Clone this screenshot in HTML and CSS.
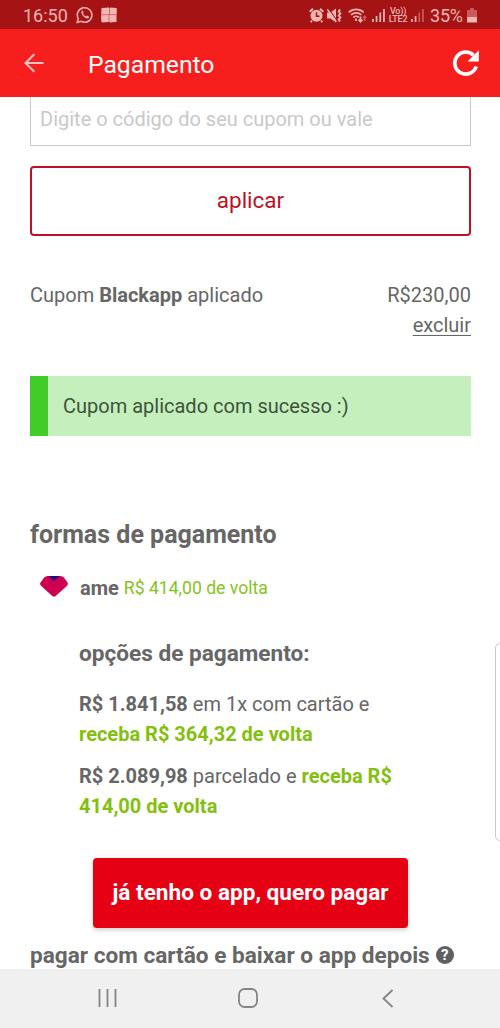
FILE: index.html
```html
<!DOCTYPE html>
<html lang="pt-BR">
<head>
<meta charset="utf-8">
<title>Pagamento</title>
<link rel="stylesheet" href="styles.css">
</head>
<body>
<div class="screen">
  <div class="status">
    <span class="time">16:50</span>
    <svg class="whats" width="18" height="18" viewBox="0 0 18 18" fill="none" stroke="currentColor"><path d="M1.2 16.5 2.3 12.6A7.3 7.3 0 1 1 5.2 15.4Z" stroke-width="1.5"/><path d="M5.5 5.2c.6-1 1.4-.7 1.7.2l.4 1.1-.7 1c.7 1.5 1.7 2.4 3.2 3l1-.9 1.7.8c.5.3.2 1.5-.8 1.9-2.700.7-7.300-3.500-6.500-7.100Z" fill="currentColor" stroke="none"/></svg>
    <svg class="tiles" width="16" height="16" viewBox="0 0 16 16" fill="currentColor"><path d="M1 1 8 .5V7L.5 7.500ZM9 .5 15.500 1V7L9 7.300ZM0 8.500 7.500 8v7L1 15.500ZM8.500 8.300 15 8v7l-6.500.5Z"/><path opacity=".55" d="M0 1h16v14H0z"/></svg>
    <span class="grow"></span>
    <svg class="alarm" width="15" height="15" viewBox="0 0 15 15"><path d="M.6 3.800 4 .8M11 .8l3.400 3M3 12.500 1.700 14.300M12 12.500l1.300 1.800" stroke="currentColor" stroke-width="1.900"/><circle cx="7.500" cy="7.800" r="6" fill="currentColor"/><path d="M7.500 4.200v4h3" fill="none" stroke="#a61314" stroke-width="1.500"/></svg>
    <svg class="mute" width="15" height="15" viewBox="0 0 15 15" fill="currentColor"><path d="M0 4.500h3.500L9 .5v14L3.500 10.500H0Z"/><path d="m1.500 .5 9 13" stroke="#a61314" stroke-width="1.200"/><path d="m.3 1.200 9 12.600" stroke="currentColor" stroke-width="1.500"/><path d="m13 1.500-1.200 2 1.500 2-1.500 2 1.500 2-1.500 2 1.200 2" fill="none" stroke="currentColor" stroke-width="2"/></svg>
    <svg class="wifi" width="19" height="15" viewBox="0 0 19 15" fill="none" stroke="currentColor" stroke-width="1.700"><path d="M.7 4.300a11 11 0 0 1 15 0M3 6.900a7.500 7.500 0 0 1 10.400 0M5.300 9.500a4 4 0 0 1 5.600 0"/><circle cx="8" cy="11.700" r="1.200" fill="currentColor" stroke="none"/><path d="M12.500 8.500v5m-1.900-1.800 1.900 2 1.900-2"/><path opacity=".45" d="M16.700 13V8.500m-1.500 1.500 1.500-1.800 1.500 1.800"/></svg>
    <svg class="bars" width="13" height="13" viewBox="0 0 13 13" fill="currentColor"><path d="M0 10h1.700v3H0zM3.700 7h1.700v6H3.700zM7.400 3.500h1.700V13H7.400zM11.100 0h1.700v13h-1.700z"/></svg>
    <span class="lte"><span>Vo))</span><span>LTE2</span></span>
    <svg class="bars2" width="13" height="13" viewBox="0 0 13 13" fill="currentColor"><path d="M0 10h1.700v3H0zM3.700 7h1.700v6H3.700z"/><path opacity=".45" d="M7.400 3.500h1.700V13H7.400zM11.100 0h1.700v13h-1.700z"/></svg>
    <span class="pct">35%</span>
    <svg class="batt" width="10" height="15" viewBox="0 0 10 15" fill="currentColor"><path opacity=".45" d="M3 0h4v2h3v7H0V2h3z"/><path d="M0 9h10v5.500H0z"/></svg>
  </div>
  <header class="bar">
    <svg class="back" width="20" height="20" viewBox="0 0 20 20" fill="none" stroke="#ffc6c4" stroke-width="2"><path d="M19.500 10H1.500M10.300 1.200 1.500 10l8.800 8.800"/></svg>
    <h1 class="title">Pagamento</h1>
    <svg class="reload" width="28" height="28" viewBox="0 0 28 28"><path d="M21.500 6.200A11 11 0 1 0 24.200 17.500" fill="none" stroke="#fff" stroke-width="3.700"/><path d="M26.800 1.200v11.300H15.500Z" fill="#fff"/></svg>
  </header>
  <main class="content">
    <div class="field"><span>Digite o código do seu cupom ou vale</span></div>
    <div class="apply"><span>aplicar</span></div>
    <div class="coupon">
      <div><span class="c-name">Cupom <b>Blackapp</b> aplicado</span></div>
      <div class="amount"><span>R$230,00</span><span class="remove">excluir</span></div>
    </div>
    <div class="alert"><span>Cupom aplicado com sucesso :)</span></div>
    <h2 class="heading">formas de pagamento</h2>
    <div class="ame">
      <svg width="28" height="21" viewBox="0 0 28 21"><path d="M7.500 0h13q2 0 3.300 1.500l3.400 4.500q1.500 2-.2 3.700L16 19.700q-2 1.800-4 0L1 9.700q-1.700-1.700-.2-3.700l3.400-4.500Q5.500 0 7.500 0Z" fill="#cf0052"/><path d="M8.500 0h11l-4 4.200q-1.500 1.300-3 0Z" fill="#330078"/></svg>
      <b class="ame-name">ame</b><span class="ame-back">R$ 414,00 de volta</span>
    </div>
    <section class="options">
      <h3 class="sub">opções de pagamento:</h3>
      <p class="option"><b>R$ 1.841,58</b> em 1x com cartão e<br><b class="green">receba R$ 364,32 de volta</b></p>
      <p class="option"><b>R$ 2.089,98</b> parcelado e <b class="green">receba R$<br>414,00 de volta</b></p>
    </section>
    <div class="pay"><span>já tenho o app, quero pagar</span></div>
    <div class="later"><span>pagar com cartão e baixar o app depois</span><i class="help">?</i></div>
  </main>
  <nav class="nav">
    <svg width="19" height="19" viewBox="0 0 19 19" stroke="#858585" stroke-width="1.800"><path d="M1.500 0v18M9.500 0v18M17.500 0v18"/></svg>
    <svg class="home" width="20" height="20" viewBox="0 0 20 20" fill="none" stroke="#858585" stroke-width="1.800"><rect x="1" y="1" width="18" height="18" rx="5.500"/></svg>
    <svg class="prev" width="12" height="19" viewBox="0 0 12 19" fill="none" stroke="#858585" stroke-width="1.800"><path d="M10.500 1 1.500 9.500l9 8.500"/></svg>
  </nav>
  <div class="edge"></div>
</div>
</body>
</html>
```
FILE: styles.css
```css
* { box-sizing: border-box; }
body { margin: 0; font-family: Roboto, "Liberation Sans", sans-serif; color: #666; background: #fff; }
h1, h2, h3, p { margin: 0; }
b { font-weight: 700; }
svg { display: block; flex: none; }
.screen { width: 500px; height: 1028px; display: flex; flex-direction: column; overflow: hidden; position: relative; }
.status { height: 29px; flex: none; background: #a61314; color: #f3b5b2; display: flex; align-items: center; padding: 1px 23px 0; white-space: nowrap; }
.time { font-size: 18px; width: 45px; }
.whats { margin-left: 8px; }
.tiles { margin-left: 7px; }
.grow { flex: 1; }
.mute { margin-left: 3px; }
.wifi { margin-left: 6px; }
.bars { margin-left: 5px; }
.lte { width: 20px; margin-left: 3px; display: flex; flex-direction: column; align-items: center; font-size: 9px; line-height: 8px; font-weight: 500; letter-spacing: -0.2px; }
.bars2 { margin-left: 3px; }
.pct { font-size: 18px; width: 33px; margin-left: 6px; letter-spacing: -0.2px; }
.batt { margin-left: 4px; }
.bar { height: 68px; flex: none; background: #f71e1e; display: flex; align-items: center; padding: 0 20px 0 24px; }
.title { font-size: 24.7px; font-weight: 400; color: #fff; margin-left: 44px; flex: 1; padding-top: 2px; }
.content { height: 872px; flex: none; overflow: hidden; padding: 0 29px 0 30px; font-size: 20px; line-height: 29.5px; white-space: nowrap; }
.field { height: 49px; border: solid #c9c9c9; border-width: 0 1px 1px; padding: 8px 9px; color: #c9c9c9; }
.apply { height: 70px; margin-top: 20px; border: 2px solid #bd1026; border-radius: 4px; display: flex; align-items: center; justify-content: center; color: #bd1026; font-size: 22.5px; }
.coupon { display: flex; justify-content: space-between; margin-top: 45px; height: 60px; }
.amount { display: flex; flex-direction: column; align-items: flex-end; }
.remove { text-decoration: underline; text-underline-offset: 3px; text-decoration-thickness: 1px; }
.alert { margin-top: 35px; height: 60px; border-left: 18px solid #41cc29; background: #c5efbd; color: #3d543a; padding: 16px 15px; }
.heading { font-size: 25px; line-height: 30px; font-weight: 700; margin-top: 84px; }
.ame { display: flex; align-items: center; height: 30px; margin-top: 24px; padding-left: 10px; }
.ame svg { margin-top: -5px; }
.ame-name { margin-left: 12px; }
.ame-back { margin-left: 5px; font-size: 17.6px; color: #84c41c; }
.options { padding-left: 49px; margin-top: 35px; }
.sub { font-size: 22.6px; line-height: 30px; font-weight: 700; }
.option { margin-top: 13px; }
.sub + .option { margin-top: 21px; }
.green { color: #84bf10; }
.pay { margin: 37px 0 0 63px; width: 315px; height: 70px; border-radius: 4px; background: #e60014; box-shadow: 0 2px 5px rgba(0,0,0,.2); color: #fff; font-size: 22.6px; font-weight: 700; display: flex; align-items: center; justify-content: center; }
.later { display: flex; align-items: center; font-size: 22.6px; font-weight: 700; margin-top: 13px; height: 30px; }
.help { width: 18px; height: 18px; border-radius: 50%; background: #5f5f5f; color: #fff; font: 700 15px/18px Roboto, sans-serif; text-align: center; margin: -3px 0 0 6px; }
.nav { height: 59px; background: #f0f0f0; display: flex; align-items: center; padding: 0 0 1px 98px; }
.home { margin-left: 121px; }
.prev { margin-left: 124px; }
.edge { position: absolute; left: 495px; top: 643px; width: 12px; height: 198px; border: 1px solid #c8c8c8; border-radius: 5px; background: #fff; }
```
